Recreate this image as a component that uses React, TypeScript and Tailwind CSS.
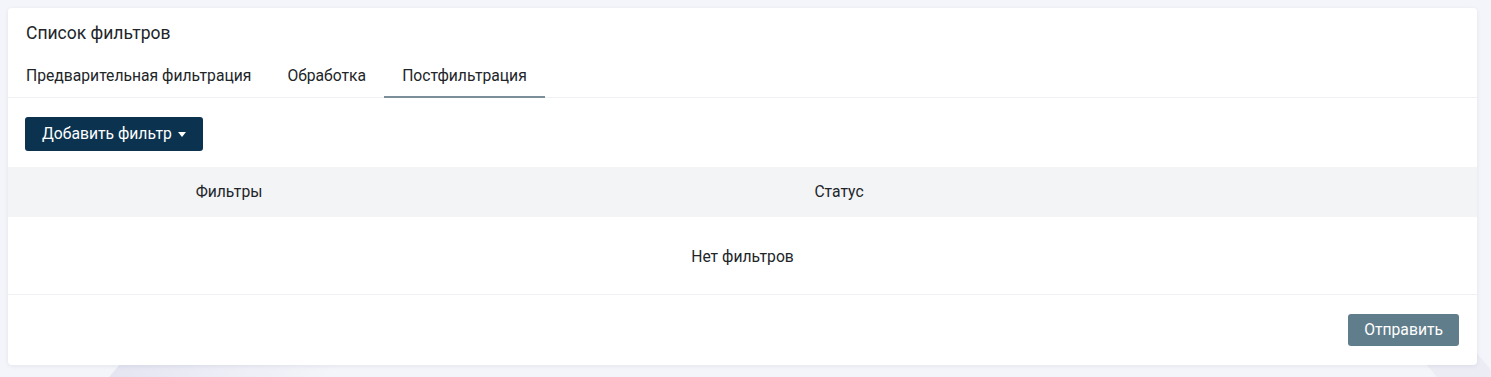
export default function App() {
  const tabs = ["Предварительная фильтрация", "Обработка", "Постфильтрация"]
  const active = 2

  return (
    <div className="relative min-h-[377px] w-full overflow-hidden bg-[#f4f5fa] pt-2 pl-2 pr-[14px] font-['Roboto',_'Liberation_Sans',_sans-serif] text-[#212529]">
      {/* faint decoration behind the card */}
      <div className="absolute left-[115px] top-[330px] h-[80px] w-[220px] -skew-x-[40deg] bg-gradient-to-r from-[#e4e5f1] to-[#f4f5fa]" />
      <div className="absolute right-[0px] top-[330px] h-[80px] w-[60px] skew-x-[40deg] bg-[#ececf5]" />

      <div className="relative rounded-[4px] bg-white shadow-[0_1px_4px_rgba(30,40,90,0.08)]">
        <div className="px-[18px] pt-[13px] pb-[9px] text-[17.5px] leading-[24px]">Список фильтров</div>

        <div className="flex border-b border-[#eef0f3]">
          {tabs.map((t, i) => (
            <div
              key={t}
              className={`-mb-px px-[18px] pt-[12px] pb-[10px] text-[15.7px] leading-[20px] ${
                i === active ? "border-b-2 border-[#7b8f9a]" : "border-b-2 border-transparent"
              }`}
            >
              {t}
            </div>
          ))}
        </div>

        <div className="px-[17px] pt-[19px] pb-[16px]">
          <button className="flex h-[34px] items-center gap-[6px] rounded-[3px] bg-[#0b3350] px-[17px] text-[15.7px] text-white">
            Добавить фильтр
            <span className="mt-[1px] h-0 w-0 border-x-[4px] border-t-[5px] border-x-transparent border-t-white" />
          </button>
        </div>

        <div className="grid grid-cols-[442px_778px_1fr] bg-[#f3f4f6] text-[15.7px]">
          <div className="flex h-[50px] items-center justify-center">Фильтры</div>
          <div className="flex h-[50px] items-center justify-center">Статус</div>
          <div />
        </div>
        <div className="flex h-[78px] items-center justify-center border-b border-[#eef0f3] pt-[2px] text-[15.7px]">
          Нет фильтров
        </div>

        <div className="flex justify-end px-[18px] pt-[19px] pb-[19px]">
          <button className="h-[32px] rounded-[3px] bg-[#607d8b] px-[16px] text-[15.7px] text-white">
            Отправить
          </button>
        </div>
      </div>
    </div>
  )
}
